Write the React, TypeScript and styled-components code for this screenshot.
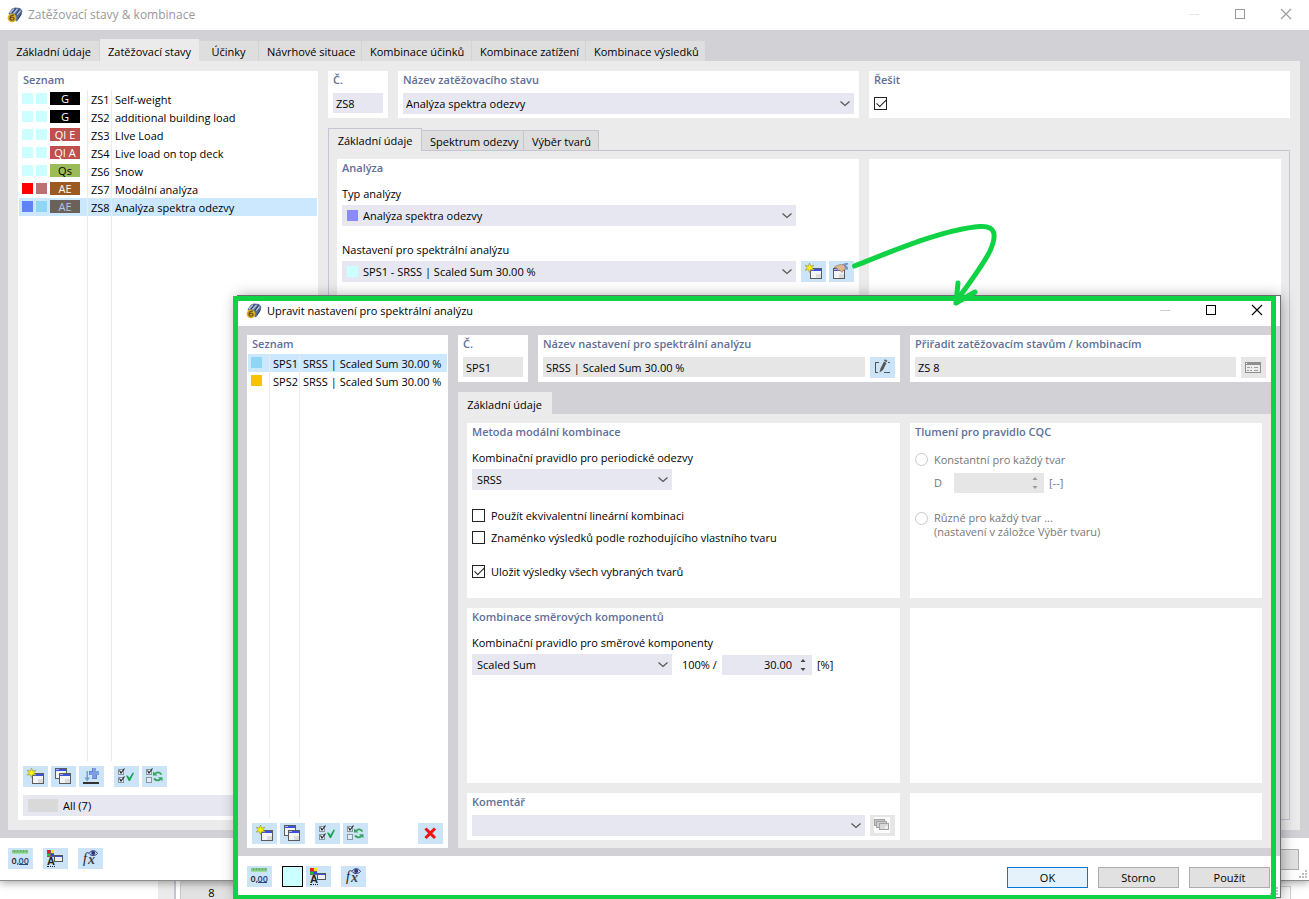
import React, { useState } from 'react';
import styled, { createGlobalStyle, css } from 'styled-components';

const FONT = `'Open Sans', 'Noto Sans', sans-serif`;
const C = {
  frame: '#d2d1d6',
  panel: '#ebebeb',
  tab: '#dedede',
  field: '#e7e7f1',
  fieldOff: '#e6e6e6',
  line: '#c5c5d2',
  action: '#cce4f7',
  select: '#cce8ff',
  heading: '#5f7098',
  green: '#10d245',
};

const GlobalStyle = createGlobalStyle`
  *, *::before, *::after { box-sizing: border-box; }
  body { margin: 0; background: #fff; overflow: hidden; }
  body, button, input, select { font-family: ${FONT}; font-size: 11px; line-height: 16px; color: #000; }
`;

const Desktop = styled.div`
  position: relative;
  display: flex;
  flex-direction: column;
  min-height: 100vh;
`;

const MainWindow = styled.section`
  flex: 1;
  display: flex;
  flex-direction: column;
  background: #fff;
  border-bottom: 1px solid #8d8d8d;
  box-shadow: 0 2px 8px rgba(0, 0, 0, 0.35);
  z-index: 1;
`;

const TitleBar = styled.header<{ $inactive?: boolean; $inset?: boolean }>`
  display: flex;
  align-items: center;
  height: 30px;
  flex: none;
  gap: 5px;
  padding: 0 15px 0 ${p => (p.$inset ? 8 : 7)}px;
  background: #fff;
  color: ${p => (p.$inactive ? '#999' : '#000')};
`;

const WindowTitle = styled.h1<{ $large?: boolean }>`
  flex: 1;
  margin: 0;
  font-size: ${p => (p.$large ? 12 : 11)}px;
  font-weight: 400;
`;

const WindowControls = styled.div`
  display: flex;
  gap: 30px;
`;

const WindowButton = styled.button`
  display: flex;
  width: 16px;
  height: 16px;
  padding: 0;
  border: 0;
  background: none;
  color: inherit;
`;

const Body = styled.div`
  flex: 1;
  min-height: 0;
  display: flex;
  background: ${C.frame};
`;

const MainBody = styled(Body)`
  flex-direction: column;
  padding: 9px 9px 8px 8px;
`;

const DialogBody = styled(Body)`
  gap: 10px;
  padding: 9px 9px 8px;
`;

const Tabs = styled.nav`
  display: flex;
  align-items: flex-end;
  height: 22px;
  flex: none;
`;

const tabBase = css`
  border: 0;
  padding: 2px 8px 0;
  white-space: nowrap;
  text-align: center;
`;

const MainTab = styled.button<{ $active?: boolean; $w: number }>`
  ${tabBase}
  width: ${p => p.$w}px;
  height: ${p => (p.$active ? 22 : 20)}px;
  padding-top: ${p => (p.$active ? 4 : 2)}px;
  background: ${p => (p.$active ? C.panel : C.tab)};
  border-right: 1px solid ${p => (p.$active ? C.panel : '#d2d2d4')};
`;

const InnerTab = styled.button<{ $active?: boolean; $w: number }>`
  ${tabBase}
  width: ${p => p.$w}px;
  height: ${p => (p.$active ? 23 : 20)}px;
  margin-bottom: ${p => (p.$active ? -1 : 0)}px;
  z-index: ${p => (p.$active ? 1 : 0)};
  background: ${p => (p.$active ? C.panel : C.tab)};
  border: 1px solid ${C.line};
  border-left-width: ${p => (p.$active ? 1 : 0)}px;
  border-bottom: 0;
`;

const MainPanel = styled.div`
  flex: 1;
  display: flex;
  gap: 10px;
  padding: 10px;
  background: ${C.panel};
`;

const Column = styled.div`
  flex: 1;
  min-width: 0;
  display: flex;
  flex-direction: column;
`;

const CardRow = styled.div<{ $cols: string }>`
  display: grid;
  grid-template-columns: ${p => p.$cols};
  gap: 10px;
  margin-bottom: 10px;
`;

const InnerPanel = styled.div`
  flex: 1;
  display: grid;
  grid-template-columns: minmax(0, 522fr) minmax(0, 412fr);
  gap: 10px;
  padding: 8px;
  border: 1px solid ${C.line};
`;

const DialogPanel = styled.div`
  flex: 1;
  display: grid;
  grid-template-columns: minmax(0, 433fr) minmax(0, 352fr);
  grid-template-rows: 1fr 1fr auto;
  gap: 10px;
  padding: 9px 9px 8px;
  background: ${C.panel};
`;

const Card = styled.section`
  min-width: 0;
  padding: 0 5px 4px;
  background: #fff;
`;

const CardTitle = styled.h2`
  display: block;
  height: 22px;
  margin: 0;
  font-size: 11px;
  line-height: 18px;
  font-weight: 600;
  color: ${C.heading};
  white-space: nowrap;
`;

const ListCard = styled(Card)<{ $w: number }>`
  display: flex;
  flex-direction: column;
  width: ${p => p.$w}px;
  flex: none;

  ${CardTitle} { height: 19px; }
`;

const List = styled.ul<{ $a: number; $b: number }>`
  flex: 1;
  margin: 0 -4px;
  padding: 0;
  list-style: none;
  background:
    linear-gradient(${C.panel}, ${C.panel}) ${p => p.$a}px 0 / 1px 100% no-repeat,
    linear-gradient(${C.panel}, ${C.panel}) ${p => p.$a + p.$b}px 0 / 1px 100% no-repeat;
`;

const ListRow = styled.li<{ $a: number; $b: number; $selected?: boolean }>`
  display: grid;
  grid-template-columns: ${p => p.$a}px ${p => p.$b}px 1fr;
  height: 18px;
  background: ${p => (p.$selected ? C.select : 'transparent')};
`;

const Marks = styled.span`
  display: flex;
  align-items: center;
  gap: 3px;
  padding: 0 0 1px 3px;
`;

const ListText = styled.span`
  padding: 2px 0 0 3px;
  border-left: 1px solid ${C.panel};
  white-space: nowrap;
`;

const Swatch = styled.span<{ $c: string; $w?: number }>`
  width: ${p => p.$w ?? 11}px;
  height: ${p => (p.$w ? 13 : 11)}px;
  flex: none;
  background: ${p => p.$c};
`;

const Badge = styled.span<{ $c: string; $fg: string }>`
  width: 30px;
  height: 13px;
  line-height: 13px;
  text-align: center;
  background: ${p => p.$c};
  color: ${p => p.$fg};
`;

const Tools = styled.div<{ $inline?: boolean }>`
  display: flex;
  gap: 3px;
  margin-top: ${p => (p.$inline ? 0 : 5)}px;
`;

const ToolButton = styled.button<{ $gap?: boolean; $end?: boolean; $off?: boolean }>`
  display: block;
  width: 25px;
  height: 21px;
  flex: none;
  padding: 0;
  border: 0;
  margin-left: ${p => (p.$end ? 'auto' : p.$gap ? '7px' : '0')};
  background: ${p => (p.$off ? C.fieldOff : C.action)};

  svg { display: block; }
`;

const ColorButton = styled.button`
  width: 21px;
  height: 21px;
  margin-left: 7px;
  padding: 0;
  border: 1px solid #000;
  background: #ccffff;
`;

const FieldRow = styled.div`
  display: flex;
  gap: 5px;
`;

const SelectBox = styled.div<{ $w?: number; $top?: number; $inset: number }>`
  display: flex;
  align-items: center;
  height: 21px;
  flex: ${p => (p.$w ? 'none' : '1')};
  width: ${p => (p.$w ? `${p.$w}px` : 'auto')};
  min-width: 0;
  margin-top: ${p => p.$top ?? 0}px;
  padding-left: ${p => p.$inset}px;
  background: ${C.field};

  > svg { flex: none; margin-left: -17px; margin-right: 1px; pointer-events: none; }
`;

const NativeSelect = styled.select<{ $pad: number }>`
  flex: 1;
  min-width: 0;
  height: 21px;
  padding: 0 20px 0 ${p => p.$pad}px;
  border: 0;
  appearance: none;
  background: transparent;
  outline: none;
`;

const Input = styled.input`
  flex: 1;
  width: 100%;
  min-width: 0;
  height: 20px;
  padding: 0 3px;
  border: 0;
  outline: none;
  background: ${C.field};

  &:read-only { background: ${C.fieldOff}; }
`;

const KeyInput = styled(Input)`
  &:read-only { background: ${C.field}; }
`;

const Label = styled.label<{ $top: number }>`
  display: block;
  height: 16px;
  margin: ${p => p.$top}px 0 3px;
  white-space: nowrap;
`;

const Choice = styled.label<{ $top: number; $off?: boolean }>`
  display: flex;
  gap: 6px;
  margin-top: ${p => p.$top}px;
  color: ${p => (p.$off ? '#777' : '#000')};
  white-space: nowrap;
`;

const Check = styled.input`
  appearance: none;
  display: grid;
  place-items: center;
  width: 13px;
  height: 13px;
  flex: none;
  margin: 1px 0 0;
  border: 1px solid #222;
  background: #fff;

  &:checked::after {
    content: '';
    width: 5px;
    height: 10px;
    margin: -4px 0 0 1px;
    border: solid #222;
    border-width: 0 1px 1px 0;
    transform: rotate(45deg);
  }
`;

const Radio = styled.input`
  appearance: none;
  width: 13px;
  height: 13px;
  flex: none;
  margin: 1px 0 0;
  border: 1px solid #c8c8c8;
  border-radius: 50%;
  background: #fff;
`;

const TwoLines = styled.span`
  line-height: 14px;
`;

const DampingRow = styled.div`
  display: grid;
  grid-template-columns: 20px 90px auto;
  align-items: center;
  justify-content: start;
  margin: 5px 0 0 19px;
  color: #777;
`;

const SpinBox = styled.span<{ $off?: boolean }>`
  display: flex;
  align-items: center;
  width: 90px;
  height: 20px;
  padding-right: 5px;
  background: ${p => (p.$off ? C.fieldOff : C.field)};
  color: ${p => (p.$off ? '#999' : '#444')};
`;

const SpinInput = styled.input`
  flex: 1;
  min-width: 0;
  height: 20px;
  padding: 0 7px 0 0;
  border: 0;
  outline: none;
  background: transparent;
  text-align: right;
`;

const Unit = styled.span`
  padding-left: 5px;
`;

const PercentRow = styled.div`
  display: flex;
  align-items: center;

  > label { width: 50px; padding-left: 10px; white-space: nowrap; }
`;

const Footer = styled.footer<{ $h: number; $pad: number }>`
  display: flex;
  gap: 3px;
  height: ${p => p.$h}px;
  flex: none;
  padding: 10px 10px 0 ${p => p.$pad}px;
  background: #fff;
`;

const Actions = styled.div`
  display: flex;
  gap: 10px;
  margin: 1px 0 0 auto;
`;

const PushButton = styled.button<{ $primary?: boolean }>`
  width: 81px;
  height: 21px;
  padding: 0;
  border: 1px solid ${p => (p.$primary ? '#0078d7' : '#adadad')};
  background: ${p => (p.$primary ? '#e5f1fb' : '#e1e1e1')};
`;

const Grip = styled.svg`
  position: absolute;
  right: 2px;
  bottom: 2px;
`;

const FooterWrap = styled.div`
  position: relative;
  flex: none;
`;

const Dialog = styled.section`
  position: absolute;
  z-index: 2;
  left: 237px;
  right: 28px;
  top: 295px;
  bottom: 1px;
  display: flex;
  flex-direction: column;
  border: 1px solid #6d6d6d;
  background: #fff;
  box-shadow: 0 2px 14px rgba(0, 0, 0, 0.4);
`;

const Highlight = styled.div`
  position: absolute;
  z-index: 3;
  left: 233px;
  right: 33px;
  top: 296px;
  bottom: 0;
  border: 5px solid ${C.green};
  border-bottom-width: 4px;
  pointer-events: none;
`;

const Arrow = styled.svg`
  position: absolute;
  z-index: 4;
  left: 840px;
  top: 215px;
  pointer-events: none;
`;

const SheetStrip = styled.div`
  display: flex;
  height: 18px;
  flex: none;
  padding-left: 158px;
`;

const SheetScroll = styled.div`
  width: 18px;
  border-right: 2px solid ${C.line};
  background: #ebebeb;
`;

const SheetHeader = styled.div`
  width: 62px;
  margin-left: 4px;
  padding-top: 2px;
  border-left: 1px solid ${C.line};
  border-top: 5px solid #ddd;
  background: #e2e2e2;
  line-height: 10px;
  text-align: center;
`;

const SheetCells = styled.div`
  flex: 1;
  margin: 5px 18px 0 0;
  border-top: 1px solid #d4d4d4;
  border-right: 1px solid #d4d4d4;
`;

/* ---------- icons ---------- */

const Ico = ({ children, smooth }: { children: React.ReactNode; smooth?: boolean }) => (
  <svg width="25" height="21" viewBox="0 0 25 21" fill="none" shapeRendering={smooth ? 'auto' : 'crispEdges'} aria-hidden="true">
    {children}
  </svg>
);

const MiniWindow = ({ x, y }: { x: number; y: number }) => (
  <g>
    <rect x={x} y={y} width="12" height="11" fill="#5b5b5b" />
    <rect x={x + 1} y={y + 1} width="10" height="2" fill="#3b52e0" />
    <rect x={x + 1} y={y + 1} width="3" height="1" fill="#aab4f4" />
    <rect x={x + 1} y={y + 3} width="10" height="7" fill="#f4f4f4" />
    <rect x={x + 6} y={y + 6} width="5" height="4" fill="#dcdcdc" />
  </g>
);

const NewIcon = () => (
  <Ico>
    <MiniWindow x={9} y={7} />
    <path
      d="M8.500 2L9.700 5.200L12.800 4.200L11 6.700L12.800 9.200L9.700 8.500L8.500 11.500L7.300 8.500L4.200 9.200L6 6.700L4.200 4.200L7.300 5.200Z"
      fill="#fff500" stroke="#8f8f3c" strokeWidth="0.600" shapeRendering="auto"
    />
  </Ico>
);

const CopyIcon = () => (
  <Ico>
    <MiniWindow x={4} y={2} />
    <MiniWindow x={8} y={7} />
  </Ico>
);

const InsertIcon = () => (
  <Ico>
    <path d="M13 2h4v3h3v4h-3v3h-4V9h-3V5h3z" fill="#7f9ce8" />
    <path d="M13 2v3h-3v4M17 9v3h-4" stroke="#6482d0" strokeWidth="1" />
    <path d="M7.500 5h1.500v6.500h2l-2.800 4l-2.700-4h2z" fill="#6f9fc4" shapeRendering="auto" />
    <rect x="4" y="16" width="16" height="2" fill="#333" />
  </Ico>
);

const Tick = ({ y, on = true }: { y: number; on?: boolean }) => (
  <g shapeRendering="auto">
    <rect x="4.500" y={y + 0.5} width="5" height="5" stroke="#8d969d" fill="#e0eef9" shapeRendering="crispEdges" />
    {on && <path d={`M5.500 ${y + 1.5}l1.500 2.500L10.500 ${y - 0.5}`} stroke="#222" strokeWidth="1.100" />}
  </g>
);

const CheckAllIcon = () => (
  <Ico>
    <Tick y={3} />
    <Tick y={11} />
    <path d="M12 9.500l2 .2l1.300 2.300L18.800 6.500L20 7L16 15h-1.200z" fill="#14a24a" shapeRendering="auto" />
  </Ico>
);

const InvertIcon = () => (
  <Ico>
    <Tick y={3} />
    <Tick y={11} on={false} />
    <g shapeRendering="auto" stroke="#36a55c" strokeWidth="1.800">
      <path d="M13 8C15 5.500 17.500 6 19.500 8.500" />
      <path d="M18.500 13C16.500 15 14 14.500 12 12.500" />
      <path d="M11 5.500V9.500H15.500z" fill="#36a55c" stroke="none" />
      <path d="M20.500 15.200V11.200H16z" fill="#36a55c" stroke="none" />
    </g>
  </Ico>
);

const DecimalsIcon = () => (
  <Ico>
    <rect x="4" y="2" width="16" height="4" fill="#7fcb86" />
    <rect x="4" y="5" width="16" height="1" fill="#a5dba8" />
    <path d="M6.500 2v2M9.500 2v2M12.500 2v2M15.500 2v2M18.500 2v2" stroke="#62a966" />
    <text x="3.500" y="15.500" fontSize="9" fontWeight="600" fill="#222">0,</text>
    <text x="10.500" y="15.500" fontSize="9" fontWeight="600" fill="#26457c">00</text>
    <rect x="11" y="16" width="9" height="1" fill="#26457c" />
  </Ico>
);

const DisplayIcon = () => (
  <Ico>
    <text x="4" y="17" fontSize="11" fontWeight="700" fontFamily="Liberation Sans, sans-serif" fill="#222">A</text>
    <rect x="4" y="2" width="7" height="7" fill="#666" />
    <rect x="4" y="2" width="3" height="3" fill="#f01818" />
    <rect x="8" y="2" width="3" height="3" fill="#ffe600" />
    <rect x="4" y="6" width="3" height="2" fill="#16c72a" />
    <rect x="8" y="6" width="3" height="2" fill="#2346e8" />
    <path d="M4 18.500h2M7 18.500h1M9 18.500h1M11 18.500h1" stroke="#222" />
    <rect x="11" y="7" width="9" height="7" fill="#555" />
    <rect x="12" y="8" width="7" height="1" fill="#3b52e0" />
    <rect x="12" y="9" width="7" height="4" fill="#eee" />
  </Ico>
);

const FormulaIcon = () => (
  <Ico smooth>
    <text x="5" y="15" fontSize="14" fontStyle="italic" fontFamily="Liberation Serif, serif" fill="#222">f</text>
    <text x="10" y="16" fontSize="14" fontStyle="italic" fontFamily="Liberation Serif, serif" fontWeight="700" fill="#444">x</text>
    <path d="M11 5.500C13 1.800 17.500 1.800 19.500 5.500C17.500 8.200 13 8.200 11 5.500Z" fill="#cfd6f2" stroke="#2b3572" />
    <circle cx="15.200" cy="5" r="2" fill="#2b3572" />
  </Ico>
);

const HandIcon = () => (
  <Ico>
    <MiniWindow x={4} y={7} />
    <g shapeRendering="auto">
      <path d="M13 3.500C15 2 17 2 19 2v1.500l-2 .5l2 2.500v2h-3z" fill="#6f96d6" />
      <path d="M5 6.500C8 4 11 3 15 4l2 4l-3 1.500l-1 2l-2.500-2.500l-2 .5l-.5-2.500z" fill="#dcb896" stroke="#94765a" strokeWidth="0.600" />
    </g>
  </Ico>
);

const PencilIcon = () => (
  <Ico smooth>
    <path d="M9 5.500H5.500v10H8M14 15.500h6M18 5.500h2" stroke="#555" shapeRendering="crispEdges" />
    <path d="M9.500 15.500L10.500 11.500L14 4.500L16.500 6L13 13z" fill="#555" />
    <path d="M14.500 3l2.500 1.500" stroke="#555" strokeWidth="1.500" />
  </Ico>
);

const TableIcon = () => (
  <Ico>
    <rect x="4" y="5" width="16" height="11" fill="#8f8f8f" />
    <rect x="5" y="8" width="14" height="7" fill="#ececec" />
    <rect x="5" y="6" width="1" height="1" fill="#fff" />
    <path d="M6 10.500h3M10 10.500h1M13 10.500h4M6 13.500h2M9 13.500h2M13 13.500h4" stroke="#a0a0a0" />
  </Ico>
);

const CommentIcon = () => (
  <Ico>
    <rect x="4" y="2" width="16" height="16" fill="#fbfbfb" />
    <rect x="4.500" y="4.500" width="10" height="6" fill="#c4c4c4" stroke="#a3a3a3" />
    <rect x="6.500" y="6.500" width="10" height="6" fill="#cfcfcf" stroke="#a3a3a3" />
    <rect x="9.500" y="8.500" width="9" height="6" fill="#d9d9d9" stroke="#a3a3a3" />
    <path d="M14.500 13.500l3-3.500v3.500z" fill="#fff" shapeRendering="auto" />
  </Ico>
);

const DeleteIcon = () => (
  <Ico smooth>
    <path d="M7.500 5.500L17 15M17 5.500L7.500 15" stroke="#f01010" strokeWidth="3" />
  </Ico>
);

const AppIcon = () => (
  <svg width="16" height="16" viewBox="0 0 16 16" aria-hidden="true">
    <path d="M1.500 6.500L5 1.500L8 0.500L13 1L15.500 4L14 8.500L10 14.500L6 12z" fill="#566c97" />
    <path d="M3 6L7 1.800M6.500 6.500L10.500 2M10 7.500L13.500 3.500" stroke="#b9c5dd" strokeWidth="1.300" />
    <path d="M5 6L9 1.200M9 7.500L12.500 2.500M11 12L14.500 6.500" stroke="#2a3a5c" strokeWidth="1" />
    <circle cx="5" cy="10.800" r="4.400" fill="#dcae22" />
    <path d="M7 8.200C4.500 7.600 3 9 3 11C3 13.800 7 13.800 7 11.600C7 10 4.500 9.800 3.500 11" fill="none" stroke="#63501a" strokeWidth="1.200" />
  </svg>
);

const Chevron = () => (
  <svg width="16" height="10" viewBox="0 0 16 10" fill="none" aria-hidden="true">
    <path d="M3.500 2.500L8 6.500L12.500 2.500" stroke="#555" strokeWidth="1.200" />
  </svg>
);

const SpinArrows = () => (
  <svg width="8" height="16" viewBox="0 0 8 16" aria-hidden="true">
    <path d="M1.500 5L4 2L6.500 5zM1.500 11L4 14L6.500 11z" fill="currentColor" />
  </svg>
);

const GripDots = () => (
  <Grip width="8" height="8" viewBox="0 0 8 8" fill="#bfbfbf" aria-hidden="true">
    <path d="M6 0h2v2H6zM3 3h2v2H3zM6 3h2v2H6zM0 6h2v2H0zM3 6h2v2H3zM6 6h2v2H6z" />
  </Grip>
);

const Controls = ({ faded }: { faded?: boolean }) => (
  <WindowControls>
    <WindowButton aria-label="Minimalizovat">
      <svg width="16" height="16"><path d="M3 7.500h10" stroke={faded ? '#e6e6e6' : '#ccc'} /></svg>
    </WindowButton>
    <WindowButton aria-label="Maximalizovat">
      <svg width="16" height="16"><rect x="3.500" y="2.500" width="9" height="9" fill="none" stroke="currentColor" /></svg>
    </WindowButton>
    <WindowButton aria-label="Zavřít">
      <svg width="16" height="16"><path d="M3 2l10 10M13 2L3 12" stroke="currentColor" strokeWidth="1.100" /></svg>
    </WindowButton>
  </WindowControls>
);

/* ---------- form parts ---------- */

interface SelectProps {
  id?: string;
  label?: string;
  value: string;
  swatch?: string;
  swatchWidth?: number;
  width?: number;
  top?: number;
  inset?: number;
}

const Select = ({ id, label, value, swatch, swatchWidth, width, top, inset = 5 }: SelectProps) => (
  <SelectBox $w={width} $top={top} $inset={inset}>
    {swatch && <Swatch $c={swatch} $w={swatchWidth} />}
    <NativeSelect id={id} aria-label={label} $pad={swatch ? 5 : 0}>
      <option>{value}</option>
    </NativeSelect>
    <Chevron />
  </SelectBox>
);

const CheckChoice = ({ text, top, initial, label }: { text?: string; top: number; initial?: boolean; label?: string }) => {
  const [on, setOn] = useState(!!initial);
  return (
    <Choice $top={top}>
      <Check type="checkbox" aria-label={label} checked={on} onChange={() => setOn(!on)} />
      {text}
    </Choice>
  );
};

/* ---------- data ---------- */

const mainTabs: [string, number][] = [
  ['Základní údaje', 92],
  ['Zatěžovací stavy', 99],
  ['Účinky', 60],
  ['Návrhové situace', 103],
  ['Kombinace účinků', 110],
  ['Kombinace zatížení', 114],
  ['Kombinace výsledků', 120],
];

const pale = '#ccffff';
const cases = [
  { id: 'ZS1', name: 'Self-weight', a: pale, b: pale, tag: 'G', bg: '#000', fg: '#fff' },
  { id: 'ZS2', name: 'additional building load', a: pale, b: pale, tag: 'G', bg: '#000', fg: '#fff' },
  { id: 'ZS3', name: 'LIve Load', a: pale, b: pale, tag: 'QI E', bg: '#c0504d', fg: '#fff' },
  { id: 'ZS4', name: 'Live load on top deck', a: pale, b: pale, tag: 'QI A', bg: '#c0504d', fg: '#fff' },
  { id: 'ZS6', name: 'Snow', a: pale, b: pale, tag: 'Qs', bg: '#9bbb59', fg: '#000' },
  { id: 'ZS7', name: 'Modální analýza', a: '#ff0000', b: '#bc7272', tag: 'AE', bg: '#9c5a20', fg: '#fff' },
  { id: 'ZS8', name: 'Analýza spektra odezvy', a: '#5f83f5', b: '#8fd6f5', tag: 'AE', bg: '#6b6158', fg: '#a8cbea' },
];

const settings = [
  { id: 'SPS1', name: 'SRSS | Scaled Sum 30.00 %', c: '#8fd6f5' },
  { id: 'SPS2', name: 'SRSS | Scaled Sum 30.00 %', c: '#f7c300' },
];

export default function App() {
  const [caseId, setCaseId] = useState('ZS8');
  const [settingId, setSettingId] = useState('SPS1');

  return (
    <Desktop>
      <GlobalStyle />
      <MainWindow>
        <TitleBar $inactive>
          <AppIcon />
          <WindowTitle $large>Zatěžovací stavy &amp; kombinace</WindowTitle>
          <Controls faded />
        </TitleBar>

        <MainBody>
          <Tabs>
            {mainTabs.map(([name, w]) => (
              <MainTab key={name} $w={w} $active={name === 'Zatěžovací stavy'}>{name}</MainTab>
            ))}
          </Tabs>
          <MainPanel>
            <ListCard $w={300}>
              <CardTitle>Seznam</CardTitle>
              <List $a={68} $b={24}>
                {cases.map(c => (
                  <ListRow key={c.id} $a={68} $b={24} $selected={c.id === caseId} onClick={() => setCaseId(c.id)}>
                    <Marks>
                      <Swatch $c={c.a} />
                      <Swatch $c={c.b} />
                      <Badge $c={c.bg} $fg={c.fg}>{c.tag}</Badge>
                    </Marks>
                    <ListText>{c.id}</ListText>
                    <ListText>{c.name}</ListText>
                  </ListRow>
                ))}
              </List>
              <Tools>
                <ToolButton aria-label="Nový"><NewIcon /></ToolButton>
                <ToolButton aria-label="Kopírovat"><CopyIcon /></ToolButton>
                <ToolButton aria-label="Vložit"><InsertIcon /></ToolButton>
                <ToolButton $gap aria-label="Vybrat vše"><CheckAllIcon /></ToolButton>
                <ToolButton aria-label="Obrátit výběr"><InvertIcon /></ToolButton>
              </Tools>
              <FieldRow>
                <Select label="Filtr" value="All (7)" swatch="#d9d9d9" swatchWidth={30} top={8} />
              </FieldRow>
            </ListCard>

            <Column>
              <CardRow $cols="60px minmax(0, 461fr) minmax(0, 421fr)">
                <Card>
                  <CardTitle as="label" htmlFor="case-no">Č.</CardTitle>
                  <FieldRow><KeyInput id="case-no" value="ZS8" readOnly /></FieldRow>
                </Card>
                <Card>
                  <CardTitle as="label" htmlFor="case-name">Název zatěžovacího stavu</CardTitle>
                  <FieldRow><Select id="case-name" value="Analýza spektra odezvy" inset={3} /></FieldRow>
                </Card>
                <Card>
                  <CardTitle>Řešit</CardTitle>
                  <CheckChoice label="Řešit" top={3} initial />
                </Card>
              </CardRow>

              <Tabs>
                <InnerTab $w={94} $active>Základní údaje</InnerTab>
                <InnerTab $w={102}>Spektrum odezvy</InnerTab>
                <InnerTab $w={75}>Výběr tvarů</InnerTab>
              </Tabs>
              <InnerPanel>
                <Card>
                  <CardTitle>Analýza</CardTitle>
                  <Label $top={5} htmlFor="analysis-type">Typ analýzy</Label>
                  <FieldRow>
                    <Select id="analysis-type" value="Analýza spektra odezvy" swatch="#8a8aff" width={454} />
                  </FieldRow>
                  <Label $top={16} htmlFor="spectral-setting">Nastavení pro spektrální analýzu</Label>
                  <FieldRow>
                    <Select id="spectral-setting" value="SPS1 - SRSS | Scaled Sum 30.00 %" swatch={pale} width={454} />
                    <Tools $inline>
                      <ToolButton aria-label="Nové nastavení"><NewIcon /></ToolButton>
                      <ToolButton aria-label="Upravit nastavení"><HandIcon /></ToolButton>
                    </Tools>
                  </FieldRow>
                </Card>
                <Card />
              </InnerPanel>
            </Column>
          </MainPanel>
        </MainBody>

        <FooterWrap>
          <Footer $h={42} $pad={8}>
            <ToolButton aria-label="Jednotky"><DecimalsIcon /></ToolButton>
            <ToolButton $gap aria-label="Zobrazení"><DisplayIcon /></ToolButton>
            <ToolButton $gap aria-label="Vzorce"><FormulaIcon /></ToolButton>
            <Actions><PushButton aria-label="Použít vše" /></Actions>
          </Footer>
          <GripDots />
        </FooterWrap>
      </MainWindow>

      <SheetStrip>
        <SheetScroll />
        <SheetHeader>8</SheetHeader>
        <SheetCells />
      </SheetStrip>

      <Dialog role="dialog" aria-label="Upravit nastavení pro spektrální analýzu">
        <TitleBar $inset>
          <AppIcon />
          <WindowTitle>Upravit nastavení pro spektrální analýzu</WindowTitle>
          <Controls />
        </TitleBar>

        <DialogBody>
          <ListCard $w={201}>
            <CardTitle>Seznam</CardTitle>
            <List $a={21} $b={30}>
              {settings.map(s => (
                <ListRow key={s.id} $a={21} $b={30} $selected={s.id === settingId} onClick={() => setSettingId(s.id)}>
                  <Marks><Swatch $c={s.c} /></Marks>
                  <ListText>{s.id}</ListText>
                  <ListText>{s.name}</ListText>
                </ListRow>
              ))}
            </List>
            <Tools>
              <ToolButton aria-label="Nový"><NewIcon /></ToolButton>
              <ToolButton aria-label="Kopírovat"><CopyIcon /></ToolButton>
              <ToolButton $gap aria-label="Vybrat vše"><CheckAllIcon /></ToolButton>
              <ToolButton aria-label="Obrátit výběr"><InvertIcon /></ToolButton>
              <ToolButton $end aria-label="Smazat"><DeleteIcon /></ToolButton>
            </Tools>
          </ListCard>

          <Column>
            <CardRow $cols="70px minmax(0, 362fr) minmax(0, 361fr)">
              <Card>
                <CardTitle as="label" htmlFor="set-no">Č.</CardTitle>
                <FieldRow><Input id="set-no" value="SPS1" readOnly /></FieldRow>
              </Card>
              <Card>
                <CardTitle as="label" htmlFor="set-name">Název nastavení pro spektrální analýzu</CardTitle>
                <FieldRow>
                  <Input id="set-name" value="SRSS | Scaled Sum 30.00 %" readOnly />
                  <ToolButton aria-label="Upravit název"><PencilIcon /></ToolButton>
                </FieldRow>
              </Card>
              <Card>
                <CardTitle as="label" htmlFor="assigned">Přiřadit zatěžovacím stavům / kombinacím</CardTitle>
                <FieldRow>
                  <Input id="assigned" value="ZS 8" readOnly />
                  <ToolButton $off aria-label="Vybrat stavy"><TableIcon /></ToolButton>
                </FieldRow>
              </Card>
            </CardRow>

            <Tabs>
              <MainTab $w={94} $active>Základní údaje</MainTab>
            </Tabs>
            <DialogPanel>
              <Card>
                <CardTitle>Metoda modální kombinace</CardTitle>
                <Label $top={5} htmlFor="periodic-rule">Kombinační pravidlo pro periodické odezvy</Label>
                <FieldRow><Select id="periodic-rule" value="SRSS" width={200} /></FieldRow>
                <CheckChoice text="Použít ekvivalentní lineární kombinaci" top={18} />
                <CheckChoice text="Znaménko výsledků podle rozhodujícího vlastního tvaru" top={6} />
                <CheckChoice text="Uložit výsledky všech vybraných tvarů" top={18} initial />
              </Card>

              <Card>
                <CardTitle>Tlumení pro pravidlo CQC</CardTitle>
                <Choice $top={7} $off>
                  <Radio type="radio" name="damping" disabled />
                  Konstantní pro každý tvar
                </Choice>
                <DampingRow>
                  <label htmlFor="damping-d">D</label>
                  <SpinBox $off>
                    <SpinInput id="damping-d" disabled />
                    <SpinArrows />
                  </SpinBox>
                  <Unit>[--]</Unit>
                </DampingRow>
                <Choice $top={18} $off>
                  <Radio type="radio" name="damping" disabled />
                  <TwoLines>
                    Různé pro každý tvar ...<br />(nastavení v záložce Výběr tvaru)
                  </TwoLines>
                </Choice>
              </Card>

              <Card>
                <CardTitle>Kombinace směrových komponentů</CardTitle>
                <Label $top={5} htmlFor="direction-rule">Kombinační pravidlo pro směrové komponenty</Label>
                <PercentRow>
                  <Select id="direction-rule" value="Scaled Sum" width={200} />
                  <label htmlFor="percent">100% /</label>
                  <SpinBox>
                    <SpinInput id="percent" defaultValue="30.00" />
                    <SpinArrows />
                  </SpinBox>
                  <Unit>[%]</Unit>
                </PercentRow>
              </Card>

              <Card />

              <Card>
                <CardTitle as="label" htmlFor="comment">Komentář</CardTitle>
                <FieldRow>
                  <Select id="comment" value="" />
                  <ToolButton $off aria-label="Vybrat komentář"><CommentIcon /></ToolButton>
                </FieldRow>
              </Card>

              <Card />
            </DialogPanel>
          </Column>
        </DialogBody>

        <FooterWrap>
          <Footer $h={41} $pad={9}>
            <ToolButton aria-label="Jednotky"><DecimalsIcon /></ToolButton>
            <ColorButton aria-label="Barva" />
            <ToolButton aria-label="Zobrazení"><DisplayIcon /></ToolButton>
            <ToolButton $gap aria-label="Vzorce"><FormulaIcon /></ToolButton>
            <Actions>
              <PushButton $primary>OK</PushButton>
              <PushButton>Storno</PushButton>
              <PushButton>Použít</PushButton>
            </Actions>
          </Footer>
          <GripDots />
        </FooterWrap>
      </Dialog>

      <Highlight />
      <Arrow width="170" height="100" viewBox="840 215 170 100" fill="none" stroke={C.green} strokeWidth="5" strokeLinecap="round" strokeLinejoin="round" aria-hidden="true">
        <path d="M854.500 266C895 250 945 229 980 226.500C996 225.500 997 235 990 251C983 265 971 281 957 300" />
        <path d="M958 283L956 303L975 292" />
      </Arrow>
    </Desktop>
  );
}
